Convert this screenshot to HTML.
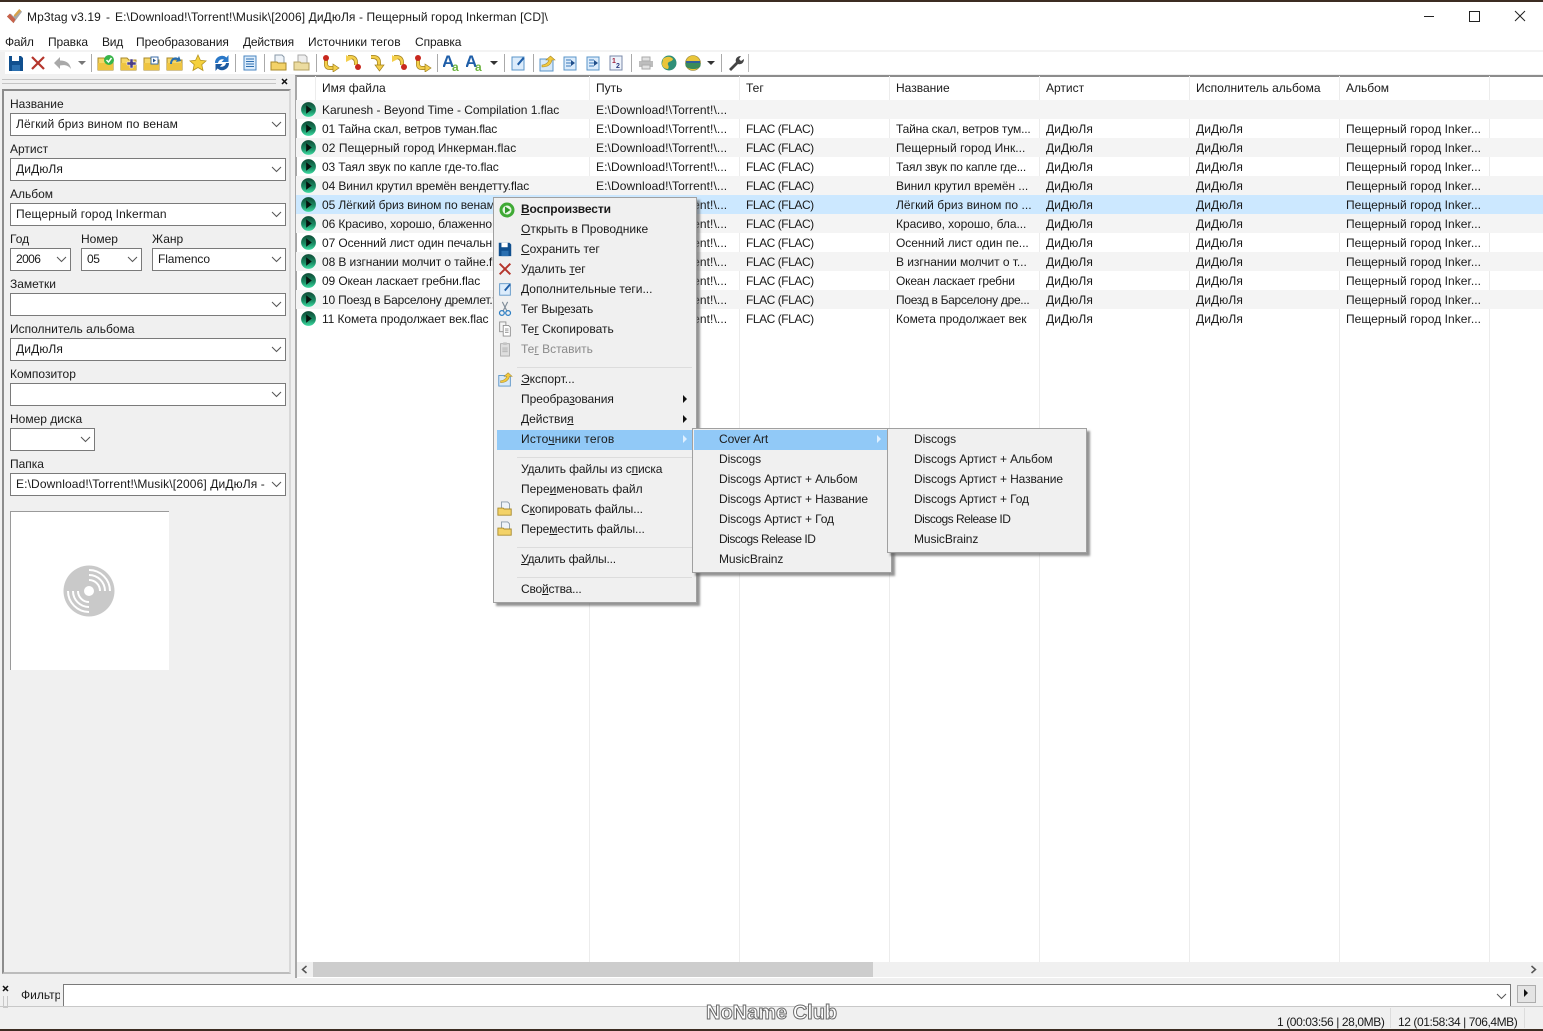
<!DOCTYPE html>
<html><head><meta charset="utf-8"><title>Mp3tag</title>
<style>
html,body{margin:0;padding:0}
body{width:1543px;height:1031px;position:relative;overflow:hidden;background:#f0f0f0;font:12px/16px "Liberation Sans","DejaVu Sans",sans-serif;color:#1a1a1a}
div,span,svg{position:absolute}
u{text-decoration:underline;text-underline-offset:1px}
.t{white-space:nowrap}
.i{width:18px;height:18px;overflow:visible}
.m{height:16px;white-space:nowrap}
.f{background:#fff;border:1px solid #7a7a7a;box-sizing:border-box;height:23px}
.f span{left:5px;top:2px;white-space:nowrap;letter-spacing:.12px}
.f svg{right:3px;top:7px;width:11px;height:7px}
.r{left:296px;width:1247px;height:19px;overflow:hidden}
.g{background:#f4f4f4}
.r span{top:2px;white-space:nowrap}
.a{left:26px;width:267px;overflow:hidden;letter-spacing:-.1px}.b{left:300px;letter-spacing:.1px}.c{left:450px;letter-spacing:-.45px}.d{left:600px;letter-spacing:-.05px}.e{left:750px;letter-spacing:.1px}.h{left:900px;letter-spacing:.1px}.j{left:1050px;letter-spacing:.05px}
.p{left:5px;top:2px;width:15px;height:15px}
.v{top:76px;width:1px;height:886px;background:#ececec}
.menu{background:#f0f0f0;border:1px solid #a0a0a0;box-sizing:border-box;box-shadow:3px 3px 2px rgba(90,90,90,.65);z-index:5}
.s{height:1px;background:#dcdcdc}
.hl{background:#91c9f7}
.ar{width:0;height:0;border-left:4px solid #111;border-top:4px solid transparent;border-bottom:4px solid transparent}
.sub .m{letter-spacing:-.1px}
</style></head><body>
<svg width="0" height="0" style="left:0;top:0"><defs>
<linearGradient id="gg" x1="0" y1="0" x2="0" y2="1"><stop offset="0" stop-color="#0e4a34"/><stop offset=".6" stop-color="#1b8f66"/><stop offset="1" stop-color="#3fdca2"/></linearGradient>
<symbol id="play" viewBox="0 0 16 16"><circle cx="8" cy="8" r="7.900" fill="url(#gg)"/><path d="M5.500 3.500l6 4.500-6 4.500z" fill="#07140e"/></symbol>
<symbol id="save" viewBox="0 0 18 18"><path d="M2 2h12l2 2v13H2z" fill="#104f8e"/><path d="M5 2h7v5H5z" fill="#fff"/><path d="M5 11h8v6H5z" fill="#2a6fb0"/></symbol>
<symbol id="x" viewBox="0 0 18 18"><path d="M3 3l12 12M15 3L3 15" stroke="#b5352c" stroke-width="2.200" fill="none"/></symbol>
<symbol id="undo" viewBox="0 0 18 18"><path d="M0 9l6-6v3.500c6 0 10 2.500 11 8.500-2.500-3.500-6-4.500-11-3.500V15z" fill="#a9a9a9"/></symbol>
<symbol id="fo" viewBox="0 0 18 18"><path d="M1 4h6l2 2h7v10H1z" fill="#f6d765" stroke="#a98a2a"/><path d="M1 9h15v7H1z" fill="#eec440"/></symbol>
<symbol id="foc" viewBox="0 0 18 18"><use href="#fo"/><circle cx="12" cy="6" r="5" fill="#39b54a"/><path d="M9.500 6l2 2 3-4" stroke="#fff" stroke-width="1.500" fill="none"/></symbol>
<symbol id="fop" viewBox="0 0 18 18"><use href="#fo"/><path d="M7 8h3V5h3v3h3v3h-3v3h-3v-3H7z" fill="#4b3f87" stroke="#fff" stroke-width=".5"/></symbol>
<symbol id="fod" viewBox="0 0 18 18"><use href="#fo"/><path d="M8 3h7v7H8z" fill="#fff" stroke="#3b6ea8"/><path d="M10 4.500l3 2-3 2z" fill="#204e8a"/></symbol>
<symbol id="for" viewBox="0 0 18 18"><use href="#fo"/><path d="M4 10c0-5 4-8 8-6l1-2 2 5-5 1 1-2c-2-1-5 0-5 4z" fill="#2a6fb0"/></symbol>
<symbol id="star" viewBox="0 0 18 18"><path d="M9 1l2.400 5.300 5.600.6-4.200 3.800 1.200 5.700L9 13.500l-5 2.900 1.200-5.700L1 6.900l5.600-.6z" fill="#f5d13d" stroke="#b59420" stroke-width=".8"/></symbol>
<symbol id="ref" viewBox="0 0 18 18"><path d="M2 9a7 7 0 0 1 11.500-5.500L15.500 1v7h-7l2.500-2.500A4.500 4.500 0 0 0 5 9z" fill="#2a78c8"/><path d="M16 9a7 7 0 0 1-11.500 5.500L2.500 17v-7h7L7 12.500A4.500 4.500 0 0 0 13 9z" fill="#1c5aa0"/></symbol>
<symbol id="doc" viewBox="0 0 18 18"><path d="M3 2h12v14H3z" fill="#dcecfb" stroke="#4a86c0"/><path d="M5 5h8M5 7.500h8M5 10h8M5 12.500h8" stroke="#2f6fb0"/></symbol>
<symbol id="cf" viewBox="0 0 18 18"><path d="M5 1h7l2 2v7H5z" fill="#eef3f8" stroke="#8a9aa8"/><path d="M1 8h6l1 1h8v7H1z" fill="#f3d268" stroke="#a98a2a"/></symbol>
<symbol id="cg" viewBox="0 0 18 18"><path d="M5 1h7l2 2v7H5z" fill="#eee" stroke="#aaa"/><path d="M1 8h6l1 1h8v7H1z" fill="#ecdca0" stroke="#b3a060"/></symbol>
<symbol id="ta" viewBox="0 0 18 18"><path d="M4 6v4q0 4 4 4h4" fill="none" stroke="#a08020" stroke-width="4"/><path d="M4 6v4q0 4 4 4h4" fill="none" stroke="#f4cf4b" stroke-width="2.600"/><path d="M11 10l6 4-6 4z" fill="#f4cf4b" stroke="#a08020" stroke-width=".7"/><circle cx="4" cy="4" r="3" fill="#c8281e"/></symbol>
<symbol id="tb" viewBox="0 0 18 18"><path d="M3 3h2q6 0 6 6v2" fill="none" stroke="#a08020" stroke-width="4"/><path d="M3 3h2q6 0 6 6v2" fill="none" stroke="#f4cf4b" stroke-width="2.600"/><path d="M1 1v7l6-3z" fill="#f4cf4b"/><circle cx="13" cy="13" r="3" fill="#c8281e"/></symbol>
<symbol id="tc" viewBox="0 0 18 18"><path d="M3 3h2q6 0 6 6v3" fill="none" stroke="#a08020" stroke-width="4"/><path d="M3 3h2q6 0 6 6v3" fill="none" stroke="#f4cf4b" stroke-width="2.600"/><path d="M7 11h9l-4.500 6z" fill="#f4cf4b" stroke="#a08020" stroke-width=".7"/></symbol>
<symbol id="aa" viewBox="0 0 18 18"><text x="-1" y="13" font-family="Liberation Sans" font-weight="bold" font-size="17" fill="#1f5ea8">A</text><text x="9" y="17" font-family="Liberation Sans" font-weight="bold" font-size="12" fill="#6db33f">a</text></symbol>
<symbol id="no" viewBox="0 0 18 18"><path d="M3 3h12v13H3z" fill="#dcecfb" stroke="#5a94c8"/><path d="M8 10l6-7 1.500 1.500-6 7z" fill="#1f5ea8"/></symbol>
<symbol id="ex" viewBox="0 0 18 18"><path d="M2 5h13v12H2z" fill="#d7e9f8" stroke="#5a94c8"/><path d="M4 11c3 0 6-2 7-5H8l4.500-4L17 6h-3c-1 5-5 7-10 7z" fill="#f2c93c" stroke="#a98a2a" stroke-width=".6"/></symbol>
<symbol id="li" viewBox="0 0 18 18"><path d="M3 3h12v13H3z" fill="#dcecfb" stroke="#5a94c8"/><path d="M5 6h5M5 9h5M5 12h5" stroke="#3a78b8"/><path d="M10 6l4 3-4 3z" fill="#204e8a"/></symbol>
<symbol id="n12" viewBox="0 0 18 18"><path d="M3 2h12v14H3z" fill="#eef3fb" stroke="#7a8aa8"/><text x="5" y="9" font-size="7" font-family="Liberation Sans" font-weight="bold" fill="#a0203a">1</text><text x="9" y="14" font-size="7" font-family="Liberation Sans" font-weight="bold" fill="#2a3a80">2</text></symbol>
<symbol id="pr" viewBox="0 0 18 18"><path d="M2 7h14v6H2z" fill="#bdbdbd"/><path d="M5 3h8v4H5zM5 11h8v4H5z" fill="#e2e2e2" stroke="#aaa"/></symbol>
<symbol id="gl" viewBox="0 0 18 18"><circle cx="9" cy="9" r="7.500" fill="#2f8f78"/><path d="M3 5c3-3 8-3 10 0-1 3-4 2-5 4s2 3 0 6c-3 0-6-2-6-5z" fill="#e9c53a"/></symbol>
<symbol id="gm" viewBox="0 0 18 18"><circle cx="9" cy="9" r="7.500" fill="#e9c53a" stroke="#8a7a30" stroke-width=".6"/><path d="M1.500 9h15v3c-2 4-12 4-15 0z" fill="#3a8a5a"/><path d="M2 8h14" stroke="#2f5f9a" stroke-width="2"/></symbol>
<symbol id="wr" viewBox="0 0 18 18"><path d="M2 15l7-7c-1-3 1-6 5-6l-2 3 2 2 3-2c0 4-3 6-6 5l-7 7z" fill="#444"/></symbol>
<symbol id="cut" viewBox="0 0 18 18"><path d="M6 1l5 10M12 1L7 11" stroke="#7f8c98" stroke-width="1.300"/><circle cx="5.500" cy="13.500" r="2.700" fill="none" stroke="#2d7fc4" stroke-width="1.400"/><circle cx="12.500" cy="13.500" r="2.700" fill="none" stroke="#2d7fc4" stroke-width="1.400"/></symbol>
<symbol id="cp" viewBox="0 0 18 18"><path d="M3 1h7v11H3z" fill="#f4f4f4" stroke="#8e8e8e"/><path d="M7 5h6l2 2v10H7z" fill="#fff" stroke="#8e8e8e"/><path d="M9 9h4M9 11h4M9 13h4" stroke="#999"/></symbol>
<symbol id="pa" viewBox="0 0 18 18"><path d="M4 3h10v14H4z" fill="#dedede" stroke="#aaa"/><path d="M7 1.500h4v3H7z" fill="#c4c4c4"/><path d="M6 8h6M6 10h6M6 12h6" stroke="#b0b0b0"/></symbol>
<symbol id="pl" viewBox="0 0 16 16"><circle cx="8" cy="8" r="7.500" fill="#3faa35"/><circle cx="8" cy="8" r="4.500" fill="#e9f6e6"/><path d="M6 4.500l5.500 3.500L6 11.500z" fill="#2f9a2a"/></symbol>
<symbol id="chev" viewBox="0 0 11 7"><path d="M1 1l4.500 4.500L10 1" fill="none" stroke="#555"/></symbol>
</defs></svg>

<div style="left:0;top:0;width:1543px;height:2px;background:#3c2c22"></div>
<div style="left:0;top:2px;width:1543px;height:48px;background:#fff"></div>
<svg class="i" style="left:6px;top:8px;width:17px;height:17px" viewBox="0 0 18 18"><path d="M1 9l7 7 9-12-3-3-6 8-3-3z" fill="#a8a8a8"/><path d="M1 9l3-3 3 3 3 3-2 4z" fill="#c8624a"/><path d="M10 9l6-6-2-2-6 7z" fill="#d8a24a"/></svg>
<span class="t" style="left:27px;top:9px;letter-spacing:.1px">Mp3tag v3.19</span>
<span class="t" style="left:106px;top:9px">-</span>
<span class="t" style="left:115px;top:9px;letter-spacing:.1px">E:\Download!\Torrent!\Musik\[2006] ДиДюЛя - Пещерный город Inkerman [CD]\</span>
<div style="left:1469px;top:11px;width:9px;height:9px;border:1px solid #222"></div>
<div style="left:1424px;top:16px;width:10px;height:1px;background:#222"></div>
<svg style="left:1514px;top:10px;width:12px;height:12px"><path d="M1 1l10 10M11 1L1 11" stroke="#222"/></svg>

<span class="t" style="left:5px;top:34px;letter-spacing:-.2px">Файл</span>
<span class="t" style="left:48px;top:34px;letter-spacing:-.1px">Правка</span>
<span class="t" style="left:102px;top:34px;letter-spacing:-.2px">Вид</span>
<span class="t" style="left:136px;top:34px;letter-spacing:-.05px">Преобразования</span>
<span class="t" style="left:243px;top:34px;letter-spacing:-.2px">Действия</span>
<span class="t" style="left:308px;top:34px;letter-spacing:.15px">Источники тегов</span>
<span class="t" style="left:415px;top:34px;letter-spacing:-.1px">Справка</span>

<div style="left:0;top:50px;width:1543px;height:2px;background:#f3f3f3"></div>
<div style="left:5px;top:52px;width:1538px;height:22px;background:#fff"></div>
<svg class="i" style="left:7px;top:54px"><use href="#save"/></svg>
<svg class="i" style="left:29px;top:54px"><use href="#x"/></svg>
<svg class="i" style="left:54px;top:54px"><use href="#undo"/></svg>
<svg style="left:78px;top:61px;width:8px;height:4px"><path d="M0 0h8L4 4z" fill="#777"/></svg>
<div style="left:91px;top:54px;width:1px;height:18px;background:#aaa"></div>
<svg class="i" style="left:97px;top:54px"><use href="#foc"/></svg>
<svg class="i" style="left:120px;top:54px"><use href="#fop"/></svg>
<svg class="i" style="left:143px;top:54px"><use href="#fod"/></svg>
<svg class="i" style="left:166px;top:54px"><use href="#for"/></svg>
<svg class="i" style="left:189px;top:54px"><use href="#star"/></svg>
<svg class="i" style="left:213px;top:54px"><use href="#ref"/></svg>
<div style="left:235px;top:54px;width:1px;height:18px;background:#aaa"></div>
<svg class="i" style="left:241px;top:54px"><use href="#doc"/></svg>
<div style="left:264px;top:54px;width:1px;height:18px;background:#aaa"></div>
<svg class="i" style="left:270px;top:54px"><use href="#cf"/></svg>
<svg class="i" style="left:293px;top:54px"><use href="#cg"/></svg>
<div style="left:316px;top:54px;width:1px;height:18px;background:#aaa"></div>
<svg class="i" style="left:322px;top:54px"><use href="#ta"/></svg>
<svg class="i" style="left:345px;top:54px"><use href="#tb"/></svg>
<svg class="i" style="left:368px;top:54px"><use href="#tc"/></svg>
<svg class="i" style="left:391px;top:54px"><use href="#tb"/></svg>
<svg class="i" style="left:414px;top:54px"><use href="#ta"/></svg>
<div style="left:437px;top:54px;width:1px;height:18px;background:#aaa"></div>
<svg class="i" style="left:443px;top:54px"><use href="#aa"/></svg>
<svg class="i" style="left:466px;top:54px"><use href="#aa"/></svg>
<svg style="left:490px;top:61px;width:8px;height:4px"><path d="M0 0h8L4 4z" fill="#333"/></svg>
<div style="left:504px;top:54px;width:1px;height:18px;background:#aaa"></div>
<svg class="i" style="left:509px;top:54px"><use href="#no"/></svg>
<div style="left:533px;top:54px;width:1px;height:18px;background:#aaa"></div>
<svg class="i" style="left:538px;top:54px"><use href="#ex"/></svg>
<svg class="i" style="left:561px;top:54px"><use href="#li"/></svg>
<svg class="i" style="left:584px;top:54px"><use href="#li"/></svg>
<svg class="i" style="left:607px;top:54px"><use href="#n12"/></svg>
<div style="left:631px;top:54px;width:1px;height:18px;background:#aaa"></div>
<svg class="i" style="left:637px;top:54px"><use href="#pr"/></svg>
<svg class="i" style="left:660px;top:54px"><use href="#gl"/></svg>
<svg class="i" style="left:684px;top:54px"><use href="#gm"/></svg>
<svg style="left:707px;top:61px;width:8px;height:4px"><path d="M0 0h8L4 4z" fill="#333"/></svg>
<div style="left:721px;top:54px;width:1px;height:18px;background:#aaa"></div>
<svg class="i" style="left:727px;top:54px"><use href="#wr"/></svg>
<div style="left:748px;top:54px;width:1px;height:18px;background:#bbb"></div>

<div style="left:2px;top:79px;width:274px;height:3px;border-top:1px solid #c4c4c4;border-bottom:1px solid #c4c4c4"></div>
<svg style="left:281px;top:78px;width:7px;height:7px"><path d="M1 1l5 5M6 1L1 6" stroke="#111" stroke-width="1.500"/></svg>
<div style="left:2px;top:89px;width:289px;height:885px;box-sizing:border-box;border:2px solid #a8a8a8;border-top-color:#8c8c8c;border-left-color:#8c8c8c;border-right-color:#d8d8d8;border-bottom-color:#bcbcbc"></div>

<span class="t" style="left:10px;top:96px">Название</span>
<div class="f" style="left:10px;top:113px;width:276px"><span>Лёгкий бриз вином по венам</span><svg viewBox="0 0 11 7"><use href="#chev"/></svg></div>
<span class="t" style="left:10px;top:141px">Артист</span>
<div class="f" style="left:10px;top:158px;width:276px"><span>ДиДюЛя</span><svg viewBox="0 0 11 7"><use href="#chev"/></svg></div>
<span class="t" style="left:10px;top:186px">Альбом</span>
<div class="f" style="left:10px;top:203px;width:276px"><span>Пещерный город Inkerman</span><svg viewBox="0 0 11 7"><use href="#chev"/></svg></div>
<span class="t" style="left:10px;top:231px">Год</span>
<span class="t" style="left:81px;top:231px">Номер</span>
<span class="t" style="left:152px;top:231px">Жанр</span>
<div class="f" style="left:10px;top:248px;width:61px"><span style="letter-spacing:-.6px">2006</span><svg viewBox="0 0 11 7"><use href="#chev"/></svg></div>
<div class="f" style="left:81px;top:248px;width:61px"><span style="letter-spacing:-.4px">05</span><svg viewBox="0 0 11 7"><use href="#chev"/></svg></div>
<div class="f" style="left:152px;top:248px;width:134px"><span style="letter-spacing:-.1px">Flamenco</span><svg viewBox="0 0 11 7"><use href="#chev"/></svg></div>
<span class="t" style="left:10px;top:276px">Заметки</span>
<div class="f" style="left:10px;top:293px;width:276px"><svg viewBox="0 0 11 7"><use href="#chev"/></svg></div>
<span class="t" style="left:10px;top:321px">Исполнитель альбома</span>
<div class="f" style="left:10px;top:338px;width:276px"><span>ДиДюЛя</span><svg viewBox="0 0 11 7"><use href="#chev"/></svg></div>
<span class="t" style="left:10px;top:366px">Композитор</span>
<div class="f" style="left:10px;top:383px;width:276px"><svg viewBox="0 0 11 7"><use href="#chev"/></svg></div>
<span class="t" style="left:10px;top:411px">Номер диска</span>
<div class="f" style="left:10px;top:428px;width:85px"><svg viewBox="0 0 11 7"><use href="#chev"/></svg></div>
<span class="t" style="left:10px;top:456px">Папка</span>
<div class="f" style="left:10px;top:473px;width:276px"><span>E:\Download!\Torrent!\Musik\[2006] ДиДюЛя -</span><svg viewBox="0 0 11 7"><use href="#chev"/></svg></div>

<div style="left:10px;top:511px;width:159px;height:159px;background:#fff;border-top:1px solid #9a9a9a;border-left:1px solid #9a9a9a;box-sizing:border-box"></div>
<svg style="left:63px;top:565px;width:52px;height:52px" viewBox="0 0 52 52"><circle cx="26" cy="26" r="25.500" fill="#c9c9c9"/>
<g fill="none" stroke="#fff" stroke-width="2"><path d="M26 5a21 21 0 0 1 21 21"/><path d="M26 10a16 16 0 0 1 16 16"/><path d="M26 15a11 11 0 0 1 11 11"/><path d="M26 47a21 21 0 0 1-21-21"/><path d="M26 42a16 16 0 0 1-16-16"/><path d="M26 37a11 11 0 0 1-11-11"/></g><circle cx="26" cy="26" r="9" fill="#c9c9c9"/><circle cx="26" cy="26" r="5" fill="#fff"/></svg>

<div style="left:295px;top:75px;width:1248px;height:903px;background:#fff;border-top:2px solid #8c8c8c;border-left:2px solid #a8a8a8;box-sizing:border-box"></div>
<div class="v" style="left:315px;height:24px"></div>
<div class="v" style="left:589px"></div><div class="v" style="left:739px"></div><div class="v" style="left:889px"></div><div class="v" style="left:1039px"></div><div class="v" style="left:1189px"></div><div class="v" style="left:1339px"></div><div class="v" style="left:1489px"></div>
<span class="t" style="left:322px;top:80px">Имя файла</span>
<span class="t" style="left:596px;top:80px">Путь</span>
<span class="t" style="left:746px;top:80px">Тег</span>
<span class="t" style="left:896px;top:80px">Название</span>
<span class="t" style="left:1046px;top:80px">Артист</span>
<span class="t" style="left:1196px;top:80px">Исполнитель альбома</span>
<span class="t" style="left:1346px;top:80px">Альбом</span>

<div class="r g" style="top:100px"><svg class="p"><use href="#play"/></svg><span class="a" style="letter-spacing:-.02px">Karunesh - Beyond Time - Compilation 1.flac</span><span class="b">E:\Download!\Torrent!\...</span></div>
<div class="r" style="top:119px"><svg class="p"><use href="#play"/></svg><span class="a" style="letter-spacing:-.2px">01 Тайна скал, ветров туман.flac</span><span class="b">E:\Download!\Torrent!\...</span><span class="c">FLAC (FLAC)</span><span class="d" style="letter-spacing:-.2px">Тайна скал, ветров тум...</span><span class="e">ДиДюЛя</span><span class="h">ДиДюЛя</span><span class="j">Пещерный город Inker...</span></div>
<div class="r g" style="top:138px"><svg class="p"><use href="#play"/></svg><span class="a" style="letter-spacing:.07px">02 Пещерный город Инкерман.flac</span><span class="b">E:\Download!\Torrent!\...</span><span class="c">FLAC (FLAC)</span><span class="d" style="letter-spacing:.05px">Пещерный город Инк...</span><span class="e">ДиДюЛя</span><span class="h">ДиДюЛя</span><span class="j">Пещерный город Inker...</span></div>
<div class="r" style="top:157px"><svg class="p"><use href="#play"/></svg><span class="a" style="letter-spacing:-.13px">03 Таял звук по капле где-то.flac</span><span class="b">E:\Download!\Torrent!\...</span><span class="c">FLAC (FLAC)</span><span class="d" style="letter-spacing:-.25px">Таял звук по капле где...</span><span class="e">ДиДюЛя</span><span class="h">ДиДюЛя</span><span class="j">Пещерный город Inker...</span></div>
<div class="r g" style="top:176px"><svg class="p"><use href="#play"/></svg><span class="a">04 Винил крутил времён вендетту.flac</span><span class="b">E:\Download!\Torrent!\...</span><span class="c">FLAC (FLAC)</span><span class="d">Винил крутил времён ...</span><span class="e">ДиДюЛя</span><span class="h">ДиДюЛя</span><span class="j">Пещерный город Inker...</span></div>
<div class="r" style="top:195px;background:#cce8ff"><svg class="p"><use href="#play"/></svg><span class="a">05 Лёгкий бриз вином по венам.flac</span><span class="b">E:\Download!\Torrent!\...</span><span class="c">FLAC (FLAC)</span><span class="d" style="letter-spacing:.05px">Лёгкий бриз вином по ...</span><span class="e">ДиДюЛя</span><span class="h">ДиДюЛя</span><span class="j">Пещерный город Inker...</span></div>
<div class="r g" style="top:214px"><svg class="p"><use href="#play"/></svg><span class="a">06 Красиво, хорошо, блаженно.flac</span><span class="b">E:\Download!\Torrent!\...</span><span class="c">FLAC (FLAC)</span><span class="d">Красиво, хорошо, бла...</span><span class="e">ДиДюЛя</span><span class="h">ДиДюЛя</span><span class="j">Пещерный город Inker...</span></div>
<div class="r" style="top:233px"><svg class="p"><use href="#play"/></svg><span class="a">07 Осенний лист один печальный.flac</span><span class="b">E:\Download!\Torrent!\...</span><span class="c">FLAC (FLAC)</span><span class="d">Осенний лист один пе...</span><span class="e">ДиДюЛя</span><span class="h">ДиДюЛя</span><span class="j">Пещерный город Inker...</span></div>
<div class="r g" style="top:252px"><svg class="p"><use href="#play"/></svg><span class="a">08 В изгнании молчит о тайне.flac</span><span class="b">E:\Download!\Torrent!\...</span><span class="c">FLAC (FLAC)</span><span class="d">В изгнании молчит о т...</span><span class="e">ДиДюЛя</span><span class="h">ДиДюЛя</span><span class="j">Пещерный город Inker...</span></div>
<div class="r" style="top:271px"><svg class="p"><use href="#play"/></svg><span class="a" style="letter-spacing:-.12px">09 Океан ласкает гребни.flac</span><span class="b">E:\Download!\Torrent!\...</span><span class="c">FLAC (FLAC)</span><span class="d" style="letter-spacing:-.2px">Океан ласкает гребни</span><span class="e">ДиДюЛя</span><span class="h">ДиДюЛя</span><span class="j">Пещерный город Inker...</span></div>
<div class="r g" style="top:290px"><svg class="p"><use href="#play"/></svg><span class="a" style="letter-spacing:-.2px">10 Поезд в Барселону дремлет.flac</span><span class="b">E:\Download!\Torrent!\...</span><span class="c">FLAC (FLAC)</span><span class="d" style="letter-spacing:-.3px">Поезд в Барселону дре...</span><span class="e">ДиДюЛя</span><span class="h">ДиДюЛя</span><span class="j">Пещерный город Inker...</span></div>
<div class="r" style="top:309px"><svg class="p"><use href="#play"/></svg><span class="a">11 Комета продолжает век.flac</span><span class="b">E:\Download!\Torrent!\...</span><span class="c">FLAC (FLAC)</span><span class="d">Комета продолжает век</span><span class="e">ДиДюЛя</span><span class="h">ДиДюЛя</span><span class="j">Пещерный город Inker...</span></div>

<div style="left:297px;top:962px;width:1246px;height:15px;background:#f0f0f0"></div>
<div style="left:313px;top:962px;width:560px;height:15px;background:#cdcdcd"></div>
<svg style="left:301px;top:965px;width:7px;height:9px"><path d="M5.500 1L1.500 4.500l4 3.500" fill="none" stroke="#555" stroke-width="1.500"/></svg>
<svg style="left:1530px;top:965px;width:7px;height:9px"><path d="M1.500 1l4 3.500-4 3.500" fill="none" stroke="#555" stroke-width="1.500"/></svg>

<div class="menu" style="left:493px;top:197px;width:204px;height:406px"><div style="left:1px;top:0;width:202px;height:404px">
<svg class="i" style="left:4px;top:4px;width:16px;height:16px"><use href="#pl"/></svg>
<span class="m" style="left:26px;top:3px;font-weight:bold;letter-spacing:-.12px"><u>В</u>оспроизвести</span>
<span class="m" style="left:26px;top:23px"><u>О</u>ткрыть в Проводнике</span>
<svg class="i" style="left:2px;top:43px;width:16px;height:16px"><use href="#save"/></svg>
<span class="m" style="left:26px;top:43px;letter-spacing:-.05px"><u>С</u>охранить тег</span>
<svg class="i" style="left:2px;top:63px;width:16px;height:16px"><use href="#x"/></svg>
<span class="m" style="left:26px;top:63px;letter-spacing:-.1px">Удалить <u>т</u>ег</span>
<svg class="i" style="left:2px;top:83px;width:16px;height:16px"><use href="#no"/></svg>
<span class="m" style="left:26px;top:83px"><u>Д</u>ополнительные теги...</span>
<svg class="i" style="left:2px;top:103px;width:16px;height:16px"><use href="#cut"/></svg>
<span class="m" style="left:26px;top:103px;letter-spacing:-.2px">Тег Вы<u>р</u>езать</span>
<svg class="i" style="left:2px;top:123px;width:16px;height:16px"><use href="#cp"/></svg>
<span class="m" style="left:26px;top:123px">Те<u>г</u> Скопировать</span>
<svg class="i" style="left:2px;top:143px;width:16px;height:16px"><use href="#pa"/></svg>
<span class="m" style="left:26px;top:143px;color:#8a8a8a">Те<u>г</u> Вставить</span>
<div class="s" style="left:22px;top:169px;width:175px"></div>
<svg class="i" style="left:2px;top:173px;width:16px;height:16px"><use href="#ex"/></svg>
<span class="m" style="left:26px;top:173px"><u>Э</u>кспорт...</span>
<span class="m" style="left:26px;top:193px;letter-spacing:-.05px">Преобра<u>з</u>ования</span><div class="ar" style="left:188px;top:197px"></div>
<span class="m" style="left:26px;top:213px">Действи<u>я</u></span><div class="ar" style="left:188px;top:217px"></div>
<div class="hl" style="left:2px;top:232px;width:196px;height:20px"></div>
<span class="m" style="left:26px;top:233px;letter-spacing:.2px">Исто<u>ч</u>ники тегов</span><div class="ar" style="left:188px;top:237px;border-left-color:#dff0ff"></div>
<div class="s" style="left:22px;top:259px;width:175px"></div>
<span class="m" style="left:26px;top:263px;letter-spacing:-.13px">Удалить файлы из с<u>п</u>иска</span>
<span class="m" style="left:26px;top:283px">Пере<u>и</u>меновать файл</span>
<svg class="i" style="left:2px;top:303px;width:16px;height:16px"><use href="#cf"/></svg>
<span class="m" style="left:26px;top:303px;letter-spacing:-.1px">С<u>к</u>опировать файлы...</span>
<svg class="i" style="left:2px;top:323px;width:16px;height:16px"><use href="#cf"/></svg>
<span class="m" style="left:26px;top:323px;letter-spacing:-.1px">Пере<u>м</u>естить файлы...</span>
<div class="s" style="left:22px;top:349px;width:175px"></div>
<span class="m" style="left:26px;top:353px;letter-spacing:-.2px"><u>У</u>далить файлы...</span>
<div class="s" style="left:22px;top:379px;width:175px"></div>
<span class="m" style="left:26px;top:383px;letter-spacing:-.2px">Сво<u>й</u>ства...</span>
</div></div>

<div class="menu sub" style="left:692px;top:428px;width:200px;height:145px;z-index:6">
<div class="hl" style="left:1px;top:1px;width:193px;height:20px"></div>
<span class="m" style="left:26px;top:2px">Cover Art</span><div class="ar" style="left:184px;top:6px;border-left-color:#dff0ff"></div>
<span class="m" style="left:26px;top:22px">Discogs</span>
<span class="m" style="left:26px;top:42px">Discogs Артист + Альбом</span>
<span class="m" style="left:26px;top:62px">Discogs Артист + Название</span>
<span class="m" style="left:26px;top:82px">Discogs Артист + Год</span>
<span class="m" style="left:26px;top:102px;letter-spacing:-.5px">Discogs Release ID</span>
<span class="m" style="left:26px;top:122px">MusicBrainz</span>
</div>
<div class="menu sub" style="left:887px;top:428px;width:200px;height:125px;z-index:7">
<span class="m" style="left:26px;top:2px">Discogs</span>
<span class="m" style="left:26px;top:22px">Discogs Артист + Альбом</span>
<span class="m" style="left:26px;top:42px">Discogs Артист + Название</span>
<span class="m" style="left:26px;top:62px">Discogs Артист + Год</span>
<span class="m" style="left:26px;top:82px;letter-spacing:-.5px">Discogs Release ID</span>
<span class="m" style="left:26px;top:102px">MusicBrainz</span>
</div>

<svg style="left:2px;top:985px;width:7px;height:7px"><path d="M1 1l5 5M6 1L1 6" stroke="#111" stroke-width="1.500"/></svg>
<div style="left:3px;top:996px;width:3px;height:11px;border:1px solid #c8c8c8;border-top:0"></div>
<div style="left:21px;top:987px;width:39px;height:16px;overflow:hidden;white-space:nowrap">Фильтр</div>
<div style="left:63px;top:984px;width:1448px;height:23px;background:#fff;border:1px solid #7a7a7a;box-sizing:border-box"><svg style="right:3px;top:8px;width:11px;height:7px" viewBox="0 0 11 7"><use href="#chev"/></svg></div>
<div style="left:1517px;top:985px;width:19px;height:18px;background:#e4e4e4;border:1px solid #adadad;box-sizing:border-box"><div class="ar" style="left:6px;top:3px"></div></div>

<div style="left:0;top:1006px;width:1543px;height:1px;background:#c8c8c8"></div>
<span class="t" style="left:1277px;top:1014px;letter-spacing:-.4px">1 (00:03:56 | 28,0MB)</span>
<span class="t" style="left:1398px;top:1014px;letter-spacing:-.43px">12 (01:58:34 | 706,4MB)</span>
<div style="left:1390px;top:1008px;width:1px;height:20px;background:#dcdcdc"></div>
<div style="left:1524px;top:1008px;width:1px;height:20px;background:#dcdcdc"></div>
<span class="t" style="left:706px;top:1003px;font:bold 20px/20px 'Liberation Sans',sans-serif;color:#fff;-webkit-text-stroke:1px #6a6a6a;z-index:8">NoName Club</span>
<div style="left:0;top:1029px;width:1543px;height:2px;background:#3c2c22"></div>
</body></html>
